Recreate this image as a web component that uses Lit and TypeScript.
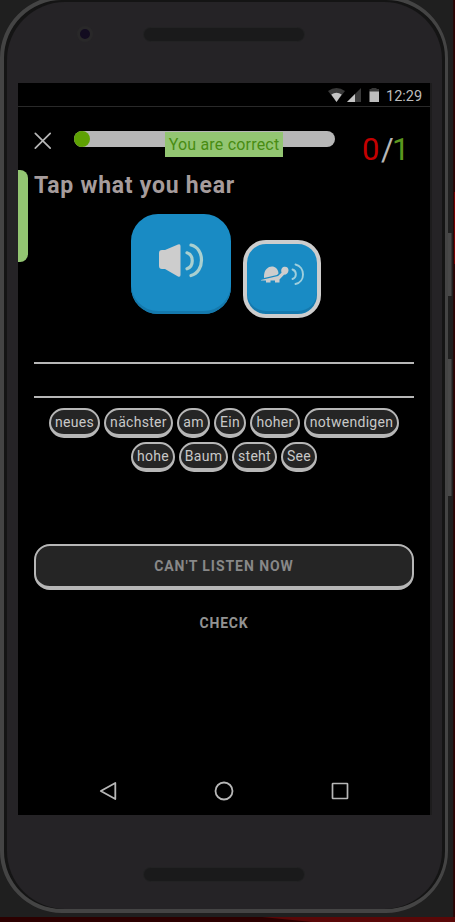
import { LitElement, html, css } from "lit";
import { customElement, property } from "lit/decorators.js";
import { styleMap } from "lit/directives/style-map.js";

const rows: [string, number][][] = [
  [["neues", 51], ["nächster", 69], ["am", 33], ["Ein", 32], ["hoher", 50], ["notwendigen", 95]],
  [["hohe", 44], ["Baum", 49], ["steht", 45], ["See", 36]],
];

@customElement("word-chip")
class WordChip extends LitElement {
  @property() word = "";
  static styles = css`
    :host {
      display: flex; justify-content: center; box-sizing: border-box; height: 30px;
      border: 2px solid #b7b7b7; border-bottom-width: 4px; border-radius: 15px;
      background: #252525; color: #c9c9c9;
      font: 14px/24px Roboto, sans-serif; letter-spacing: 0.3px; white-space: nowrap;
    }
  `;
  render() { return html`<span>${this.word}</span>`; }
}

@customElement("app-root")
class AppRoot extends LitElement {
  static styles = css`
    :host {
      display: block; position: relative; width: 455px; height: 922px; overflow: hidden;
      background: #1f1f1f; font-family: Roboto, sans-serif;
    }
    * { box-sizing: border-box; }
    svg { display: block; }
    .desk { position: absolute; left: 0; right: 0; bottom: 0; height: 5px; background: #2c0000; }
    .sheen { margin-left: 262px; height: 5px; background: #5a0808; clip-path: polygon(0 0, 100% 0, 100% 100%, 50px 100%); }
    .edge { position: absolute; right: 0; top: 0; width: 2px; height: 917px; background: linear-gradient(90deg, #200d0d, #350000); }
    .glow { position: absolute; right: 0; top: 192px; width: 1px; height: 72px; background: #780000; }
    .side { position: absolute; left: 448px; width: 4px; background: #484848; border-right: 1px solid #343434; }
    .power { top: 233px; height: 63px; }
    .volume { top: 359px; height: 137px; }
    .phone {
      position: absolute; left: 0; top: -4px; width: 448px; height: 917px;
      border: 4px solid #444; border-right-width: 3px; border-radius: 62px; background: #141414;
    }
    .body {
      margin: 2px 3px 0; height: 907px; border-radius: 58px; background: #252326;
      display: flex; flex-direction: column; padding-left: 11px;
    }
    .top { height: 81px; display: flex; padding-top: 25px; }
    .camera { width: 16px; height: 16px; margin: -1px 0 0 59px; border-radius: 8px; border: 3px solid #292829; background: #130c20; }
    .speaker { width: 162px; height: 15px; margin-left: 50px; border-radius: 8px; background: #1a1a1b; border: 1px solid #222223; }
    .bottom { padding-top: 52px; }
    .bottom .speaker { margin-left: 125px; }
    .screen { width: 414px; height: 732px; border-right: 2px solid #1d1c1d; background: #000; display: flex; flex-direction: column; }
    .status {
      height: 24px; border-bottom: 1px solid #292929; display: flex; align-items: center;
      justify-content: flex-end; padding-right: 8px; color: #bdbdbd; font-size: 14.5px; line-height: 23px;
    }
    .status span { width: 36px; padding-top: 3px; margin-left: 6px; white-space: nowrap; }
    .head { height: 63px; display: flex; padding-left: 16px; position: relative; }
    .close { margin-top: 25px; }
    .bar { margin: 24px 0 0 22px; width: 261px; height: 16px; border-radius: 8px; background: #b7b7b7; }
    .fill { width: 16px; height: 16px; border-radius: 8px; background: #5ea103; }
    .toast {
      position: absolute; left: 147px; top: 25px; width: 118px; height: 25px; background: #93c572;
      color: #488c12; font-size: 16px; line-height: 26px; text-align: center; letter-spacing: 0.2px; white-space: nowrap;
    }
    .score { margin: 25px 0 0 27px; font-size: 31px; line-height: 36px; color: #b7b7b7; white-space: nowrap; display: flex; }
    .score b { font-weight: 400; }
    .red { color: #c40000; width: 19px; }
    .slash { width: 11px; }
    .green { color: #5b971e; }
    .lesson { display: flex; height: 107px; }
    .tab { width: 10px; height: 92px; flex: none; border-radius: 0 8px 8px 0; background: #93c572; }
    h1 { margin: 1px 0 0 6px; font-size: 23px; line-height: 30px; height: 30px; font-weight: 700; color: #a69c9c; letter-spacing: 0.75px; white-space: nowrap; }
    .stage { display: flex; justify-content: center; align-items: flex-start; gap: 12px; margin-top: -63px; height: 148px; padding-left: 4px; }
    .play { width: 100px; height: 100px; border-radius: 27px; background: #198bc4; box-shadow: inset 0 -3px #1579ad; }
    .slow { width: 78px; height: 78px; margin-top: 26px; border-radius: 23px; border: 4px solid #cdcdcd; background: #198bc4; box-shadow: inset 0 -3px #1579ad; }
    .line { height: 36px; margin: 0 16px; border-top: 2px solid #b7b7b7; border-bottom: 2px solid #b7b7b7; }
    .words { display: flex; flex-direction: column; gap: 4px; margin-top: 10px; }
    .row { display: flex; justify-content: center; gap: 4px; }
    .button {
      margin: 72px 16px 0; height: 46px; border: 2px solid #b7b7b7; border-bottom-width: 4px; border-radius: 16px;
      background: #252525; color: #888; font-weight: 700; font-size: 14px; line-height: 40px; text-align: center; letter-spacing: 0.95px;
    }
    .check { margin-top: 22px; color: #929292; font-weight: 700; font-size: 14px; line-height: 22px; text-align: center; letter-spacing: 0.8px; }
    .nav { display: flex; gap: 96px; padding-left: 80px; margin-top: 147px; }
  `;
  render() {
    return html`
      <div class="desk"><div class="sheen"></div></div><div class="edge"></div><div class="glow"></div>
      <div class="side power"></div><div class="side volume"></div>
      <div class="phone"><div class="body">
        <div class="top"><div class="camera"></div><div class="speaker"></div></div>
        <div class="screen">
          <div class="status">
            <svg width="52" height="16" viewBox="0 0 52 16">
              <path d="M0 4Q8.500-2 17 4L8.500 15Z" fill="#393939"/><path d="M3.300 7.500Q8.500 4 13.700 7.500L8.500 15Z" fill="#c4c4c4"/>
              <path d="M33 1V15H19Z" fill="#393939"/><path d="M27 7V15H19Z" fill="#c4c4c4"/>
              <path d="M43.500 1H48.500V2H51V5H41.500V2H43.500Z" fill="#393939"/><path d="M41.500 4.500H51V15H41.500Z" fill="#bcbcbc"/>
            </svg><span>12:29</span>
          </div>
          <div class="head">
            <svg class="close" width="18" height="18" viewBox="0 0 18 18"><path d="M1.300 1.300L16.200 16.200M16.200 1.300L1.300 16.200" stroke="#b7b7b7" stroke-width="1.700" stroke-linecap="round"/></svg>
            <div class="bar"><div class="fill"></div></div>
            <div class="toast">You are correct</div>
            <div class="score"><b class="red">0</b><b class="slash">/</b><b class="green">1</b></div>
          </div>
          <div class="lesson"><div class="tab"></div><h1>Tap what you hear</h1></div>
          <div class="stage">
            <div class="play"><svg width="100" height="100" viewBox="0 0 100 100">
              <path d="M28 39Q28 36 31 36H34L47 30.500Q49.500 29.500 49.500 32V61Q49.500 63.500 47 62.500L34 55H31Q28 55 28 52Z" fill="#cdcdcd"/>
              <path d="M56 38.800C63 41 63 52.500 56 54.800M60 31C74 34 74 58 60 61.500" fill="none" stroke="#a9d0d0" stroke-width="3.200" stroke-linecap="round"/>
            </svg></div>
            <div class="slow"><svg width="70" height="70" viewBox="0 0 70 70">
              <path d="M17 32.500C17 20 31 19.500 31.500 29.500L30 31L17 34Z M14 36L31 32L34.500 28.800C33.500 24.500 35.500 22.800 38 22.800Q41.500 23 41.500 26.500Q41 30.500 37 30.800L32.500 35.500V38.500H28V36.500H23.500V38.500H19V36.500H14Z" fill="#cdcdcd"/>
              <path d="M45.500 25.500C50 27 50 33.500 45.500 35M48.500 20.500C58.500 23 58.500 38 48.500 40" fill="none" stroke="#9fcfdd" stroke-width="1.900" stroke-linecap="round"/>
            </svg></div>
          </div>
          <div class="line"></div>
          <div class="words">${rows.map((r) => html`<div class="row">${r.map(([w, n]) => html`<word-chip .word=${w} style=${styleMap({ width: n + "px" })}></word-chip>`)}</div>`)}</div>
          <div class="button">CAN'T LISTEN NOW</div>
          <div class="check">CHECK</div>
          <div class="nav">
            <svg width="20" height="20" viewBox="0 0 20 20"><path d="M17.300 2V18L2.800 10Z" fill="none" stroke="#b7b7b7" stroke-width="1.800" stroke-linejoin="round"/></svg>
            <svg width="20" height="20" viewBox="0 0 20 20"><circle cx="10" cy="10" r="8.500" fill="none" stroke="#b7b7b7" stroke-width="1.800"/></svg>
            <svg width="20" height="20" viewBox="0 0 20 20"><rect x="2.500" y="2.500" width="15" height="15" rx="0.500" fill="none" stroke="#b7b7b7" stroke-width="1.700"/></svg>
          </div>
        </div>
        <div class="bottom"><div class="speaker"></div></div>
      </div></div>
    `;
  }
}
